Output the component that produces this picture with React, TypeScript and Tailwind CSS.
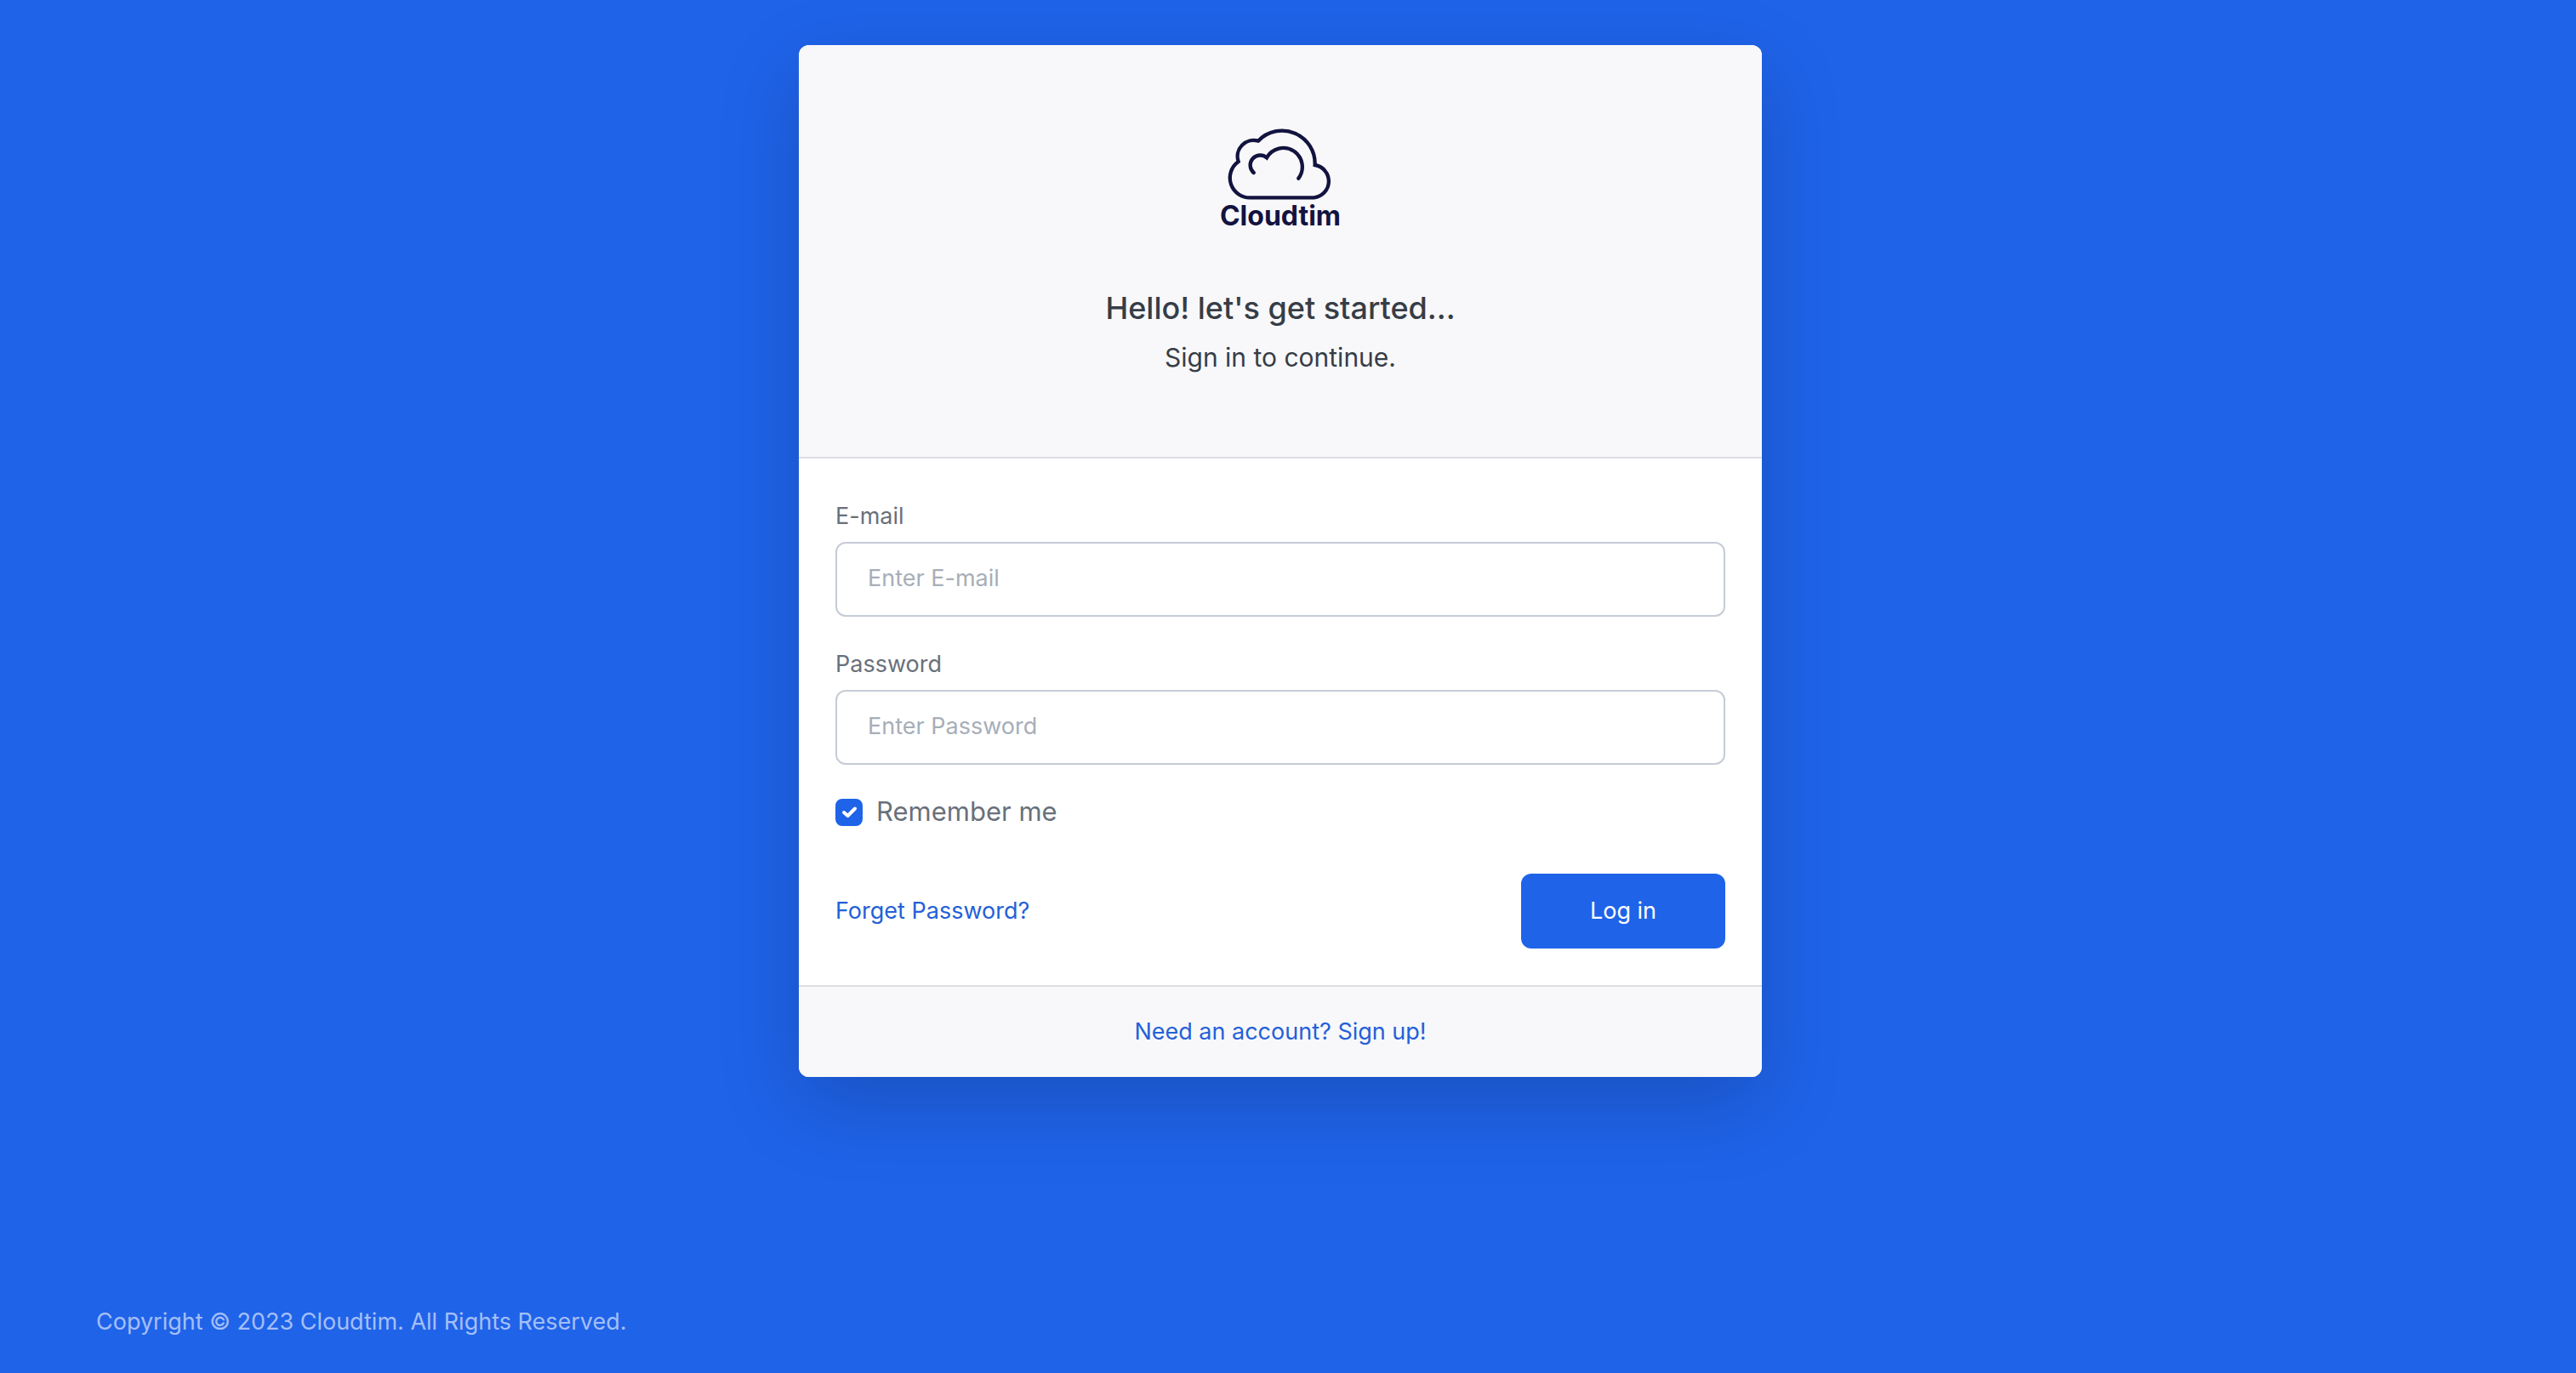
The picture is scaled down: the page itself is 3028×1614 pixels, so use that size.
import React from "react";

function Logo() {
  return (
    <div className="flex flex-col items-center text-[#131340]">
      <svg viewBox="136 64 358 252" className="h-[84px] w-[120px]" fill="none" stroke="currentColor" strokeWidth="13" strokeLinecap="round" strokeLinejoin="miter" overflow="visible" aria-hidden="true">
        <path d="M213 308 A70 70 0 0 1 167 181 A57 57 0 0 1 237 108 A116 116 0 0 1 437 193 A58 58 0 0 1 433 308 Z" />
        <path d="M221 220 A35 35 0 0 1 267 167 A67 67 0 1 1 379 240" />
      </svg>
      <span className="text-[32px] leading-[38px] font-bold">Cloudtim</span>
    </div>
  );
}

type FieldProps = { id: string; label: string; type: string; placeholder: string };

function Field({ id, label, type, placeholder }: FieldProps) {
  return (
    <div className="flex flex-col gap-1.5">
      <label htmlFor={id} className="text-[27px] leading-[49px] text-[#69707a]">
        {label}
      </label>
      <input
        id={id}
        type={type}
        placeholder={placeholder}
        className="h-[88px] w-full rounded-xl border-2 border-[#c5ccd6] bg-white px-9 pb-1 text-[27px] text-[#69707a] outline-none placeholder:text-[#a7aeb8] focus:border-[#1f63e9]"
      />
    </div>
  );
}

export default function App() {
  return (
    <div className="flex min-h-screen flex-col bg-[#1f63e9] pr-[18px] font-[Inter,sans-serif]">
      <main className="mx-auto mt-[53px] w-full max-w-[1132px] overflow-hidden rounded-xl bg-white shadow-[0_32px_96px_rgba(0,0,0,0.175)]">
        <header className="border-b-2 border-[#dddee1] bg-[#f8f8fa] pt-[98px] pb-[92px] text-center text-[#363d47]">
          <Logo />
          <h1 className="mt-16 text-[36px] leading-[50px] font-medium">Hello! let's get started...</h1>
          <p className="mt-2 text-[30px] leading-[50px]">Sign in to continue.</p>
        </header>

        <form className="p-[43px]" onSubmit={(e) => e.preventDefault()}>
          <div className="flex flex-col gap-[31px]">
            <Field id="email" label="E-mail" type="email" placeholder="Enter E-mail" />
            <Field id="password" label="Password" type="password" placeholder="Enter Password" />
          </div>

          <div className="mt-8 flex h-12 items-center gap-4">
            <span className="grid size-8 place-items-center">
              <input
                id="remember"
                type="checkbox"
                defaultChecked
                className="peer col-start-1 row-start-1 size-8 appearance-none rounded-lg border-2 border-[#c5ccd6] checked:border-[#1f63e9] checked:bg-[#1f63e9]"
              />
              <svg viewBox="0 0 32 32" className="pointer-events-none invisible col-start-1 row-start-1 size-8 peer-checked:visible" fill="none" stroke="white" strokeWidth="4" strokeLinecap="round" strokeLinejoin="round" aria-hidden="true">
                <path d="M10 16 L14.5 20 L23 11.5" />
              </svg>
            </span>
            <label htmlFor="remember" className="pb-0.5 text-[31px] leading-[46px] text-[#69707a]">
              Remember me
            </label>
          </div>

          <div className="mt-12 flex items-center justify-between">
            <a href="#forgot" className="text-[27px] leading-[42px] text-[#2460d8]">
              Forget Password?
            </a>
            <button type="submit" className="h-[88px] w-60 rounded-xl bg-[#1f63e9] text-[27px] text-white">
              Log in
            </button>
          </div>
        </form>

        <div className="border-t-2 border-[#dddee1] bg-[#f8f8fa] py-8 text-center text-[27px] leading-[42px]">
          <a href="#signup" className="text-[#2460d8]">
            Need an account? Sign up!
          </a>
        </div>
      </main>

      <footer className="mt-auto px-[113px] pb-[39px] text-[27px] leading-[42px] text-white/60">
        Copyright © 2023 Cloudtim. All Rights Reserved.
      </footer>
    </div>
  );
}
